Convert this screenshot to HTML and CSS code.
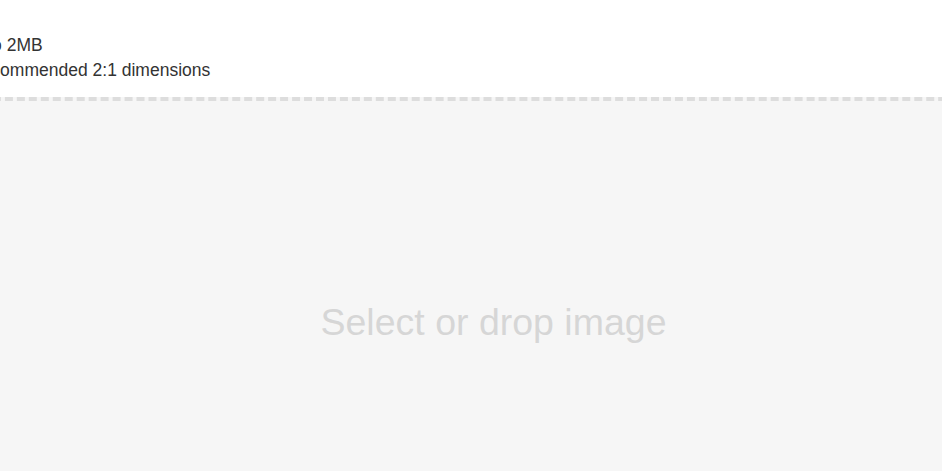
FILE: index.html
```html
<!DOCTYPE html>
<html lang="en">
<head>
<meta charset="utf-8">
<title>Image upload</title>
<link rel="stylesheet" href="styles.css">
</head>
<body>
  <div class="uploader">
    <div class="hints">
      <div class="hint hint-size">Up to 2MB</div>
      <div class="hint">Recommended 2:1 dimensions</div>
    </div>
    <div class="dropzone">
      <span class="dropzone-label">Select or drop image</span>
    </div>
  </div>
</body>
</html>
```

FILE: styles.css
```css
html, body {
  margin: 0;
  padding: 0;
  background: #ffffff;
  overflow: hidden;
}

body {
  font-family: "Liberation Sans", Arial, sans-serif;
  color: #333333;
}

.uploader {
  width: 1049px;
  margin-left: -31px;
  padding-top: 33px;
}

.hints {
  display: flex;
  flex-direction: column;
  margin-bottom: 14px;
}

.hint {
  font-size: 17.5px;
  line-height: 25px;
}

.hint-size {
  margin-left: -9px;
}

.dropzone {
  height: 442px;
  background: #f6f6f6;
  border-top: 4px dashed #dddddd;
  display: flex;
  align-items: center;
  justify-content: center;
}

.dropzone-label {
  font-size: 37.5px;
  color: #d6d6d6;
}
```
